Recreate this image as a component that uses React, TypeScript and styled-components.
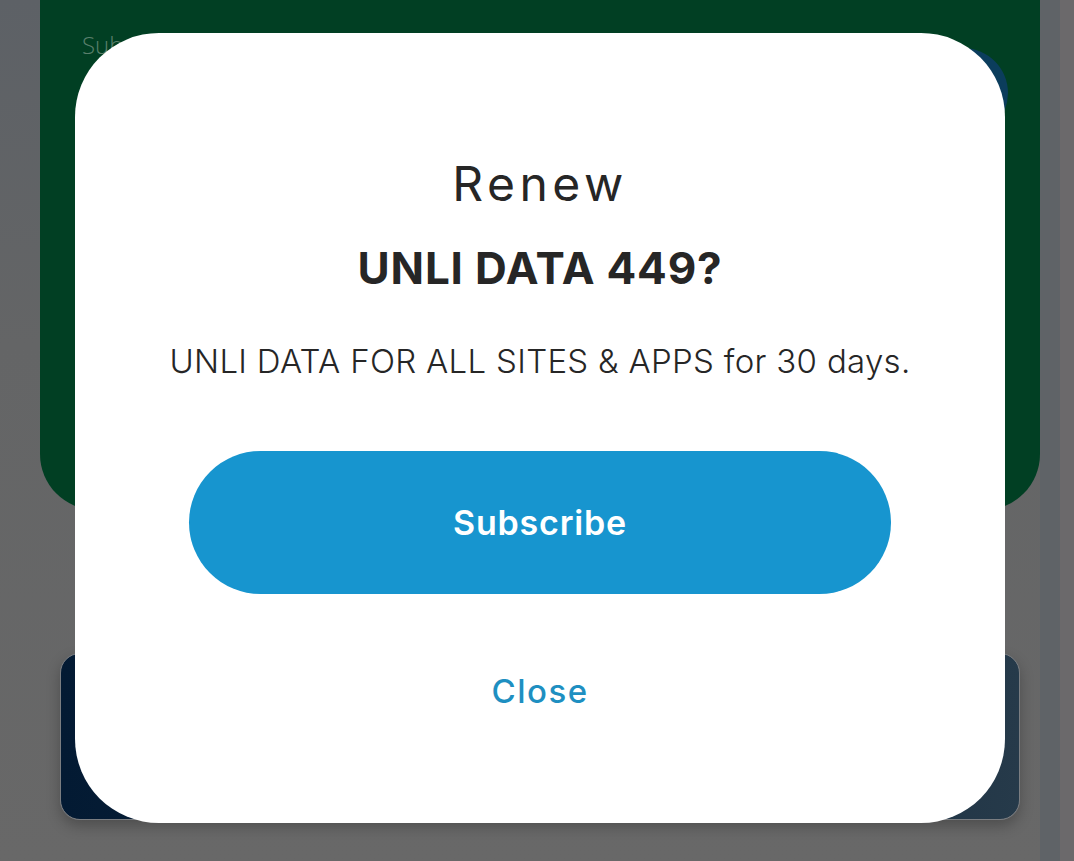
import styled, { createGlobalStyle } from 'styled-components';

const GlobalStyle = createGlobalStyle`
  html, body {
    margin: 0;
    padding: 0;
    height: 100%;
  }
  body {
    background: linear-gradient(180deg, #5d6166 0%, #646566 40%, #686868 100%);
    font-family: Inter, 'Open Sans', sans-serif;
    overflow: hidden;
  }
`;

const Screen = styled.div`
  width: 1074px;
  height: 861px;
  display: flex;
  flex-direction: column;
  padding: 0 34px 0 40px;
  box-sizing: border-box;
  background: linear-gradient(90deg, transparent 0 1040px, #5f6367 1040px 1060px, #6b696b 1060px);
`;

const PlanCard = styled.div`
  height: 510px;
  background: #013f23;
  border-radius: 0 0 56px 56px;
  padding: 28px 42px;
  box-sizing: border-box;
  display: flex;
  justify-content: space-between;
  align-items: flex-start;
`;

const PlanLabel = styled.span`
  font-family: 'Open Sans', sans-serif;
  font-size: 24px;
  font-weight: 300;
  color: #5a7f6c;
`;

const PlanBadge = styled.div`
  width: 90px;
  height: 90px;
  margin-top: 20px;
  margin-right: -10px;
  border-radius: 50%;
  background: #0b3d5c;
`;

const PromoCard = styled.div`
  height: 165px;
  margin: 143px 20px 0 20px;
  border-radius: 20px;
  border: 1px solid #7a7d81;
  background: linear-gradient(90deg, #031a33 0%, #0f2638 50%, #263a4a 100%);
  box-shadow: 0 6px 14px rgba(0, 0, 0, 0.25);
`;

const Modal = styled.div`
  position: fixed;
  left: 75px;
  top: 33px;
  width: 930px;
  height: 790px;
  background: #ffffff;
  border-radius: 84px;
  display: flex;
  flex-direction: column;
  align-items: center;
  padding-top: 122px;
  box-sizing: border-box;
`;

const Title = styled.h2`
  margin: 0;
  font-size: 48px;
  font-weight: 400;
  letter-spacing: 4.5px;
  line-height: 58px;
  color: #262626;
`;

const PlanName = styled.h3`
  margin: 29px 0 0;
  font-size: 44px;
  font-weight: 700;
  letter-spacing: 0.8px;
  line-height: 52px;
  color: #262626;
`;

const Description = styled.p`
  margin: 45px 0 0;
  font-size: 33px;
  font-weight: 300;
  letter-spacing: 0.3px;
  line-height: 44px;
  color: #262626;
`;

const SubscribeButton = styled.button`
  margin-top: 68px;
  width: 702px;
  height: 143px;
  border: none;
  border-radius: 72px;
  background: #1795cf;
  color: #ffffff;
  font-family: Inter, sans-serif;
  font-size: 34px;
  font-weight: 600;
  letter-spacing: 0.8px;
  cursor: pointer;
`;

const CloseButton = styled.button`
  margin-top: 76px;
  border: none;
  background: none;
  color: #1e8fc1;
  font-family: Inter, sans-serif;
  font-size: 33px;
  font-weight: 500;
  letter-spacing: 1.5px;
  cursor: pointer;
`;

const App: React.FC = () => {
  return (
    <>
      <GlobalStyle />
      <Screen>
        <PlanCard>
          <PlanLabel>Subscription</PlanLabel>
          <PlanBadge />
        </PlanCard>
        <PromoCard />
      </Screen>
      <Modal>
        <Title>Renew</Title>
        <PlanName>UNLI DATA 449?</PlanName>
        <Description>UNLI DATA FOR ALL SITES &amp; APPS for 30 days.</Description>
        <SubscribeButton>Subscribe</SubscribeButton>
        <CloseButton>Close</CloseButton>
      </Modal>
    </>
  );
};

export default App;
